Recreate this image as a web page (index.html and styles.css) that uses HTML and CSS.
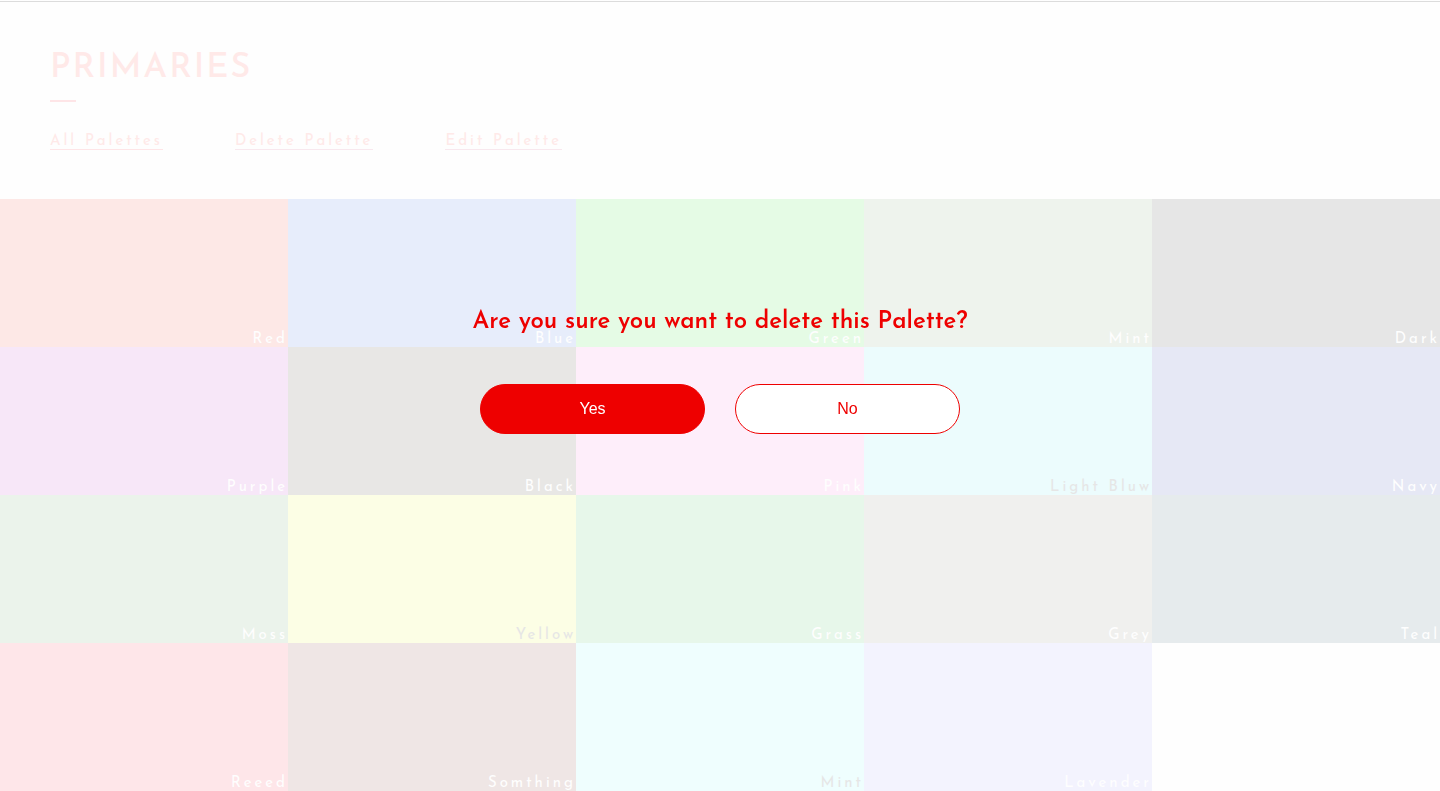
FILE: index.html
```html
<!DOCTYPE html>
<html lang="en">
<head>
<meta charset="utf-8">
<meta name="viewport" content="width=device-width, initial-scale=1">
<title>Primaries</title>
<link rel="stylesheet" href="styles.css">
</head>
<body>
<div class="page">
  <header class="header">
    <h1 class="title">PRIMARIES</h1>
    <nav class="nav">
      <a class="nav-link" href="#all">All Palettes</a>
      <a class="nav-link nav-link-alt" href="#delete">Delete Palette</a>
      <a class="nav-link nav-link-alt" href="#edit">Edit Palette</a>
    </nav>
  </header>
  <main class="swatches">
    <div class="swatch red">Red</div>
    <div class="swatch blue">Blue</div>
    <div class="swatch green">Green</div>
    <div class="swatch mint">Mint</div>
    <div class="swatch dark">Dark</div>
    <div class="swatch purple">Purple</div>
    <div class="swatch black">Black</div>
    <div class="swatch pink">Pink</div>
    <div class="swatch light-blue dark-label">Light Bluw</div>
    <div class="swatch navy">Navy</div>
    <div class="swatch moss">Moss</div>
    <div class="swatch yellow dark-label">Yellow</div>
    <div class="swatch grass">Grass</div>
    <div class="swatch grey">Grey</div>
    <div class="swatch teal">Teal</div>
    <div class="swatch reeed">Reeed</div>
    <div class="swatch somthing">Somthing</div>
    <div class="swatch aqua dark-label">Mint</div>
    <div class="swatch lavender">Lavender</div>
  </main>
</div>
<div class="overlay" role="dialog" aria-modal="true" aria-labelledby="question">
  <h2 class="question" id="question">Are you sure you want to delete this Palette?</h2>
  <div class="actions">
    <button class="button button-yes" type="button">Yes</button>
    <button class="button button-no" type="button">No</button>
  </div>
</div>
</body>
</html>
```
FILE: styles.css
```css
* {
  box-sizing: border-box;
}

body {
  margin: 0;
  background: #fefefe;
  font-family: "Josefin Sans", Lato, sans-serif;
}

.page {
  display: flex;
  flex-direction: column;
  min-height: 100vh;
  padding-top: 1px;
}

.header {
  border-top: 1px solid #dcdcdc;
  padding: 47px 50px 49px;
  color: #ffe9e8;
}

.title {
  margin: 0;
  font-size: 34px;
  line-height: 40px;
  font-weight: 500;
  letter-spacing: 2px;
}

.title::after {
  content: "";
  display: block;
  width: 26px;
  height: 2px;
  margin-top: 11px;
  background: #fee5e7;
}

.nav {
  display: flex;
  gap: 72px;
  margin-top: 32px;
}

.nav-link {
  border-bottom: 1px solid #fee5e7;
  color: inherit;
  font-size: 15px;
  line-height: 15px;
  font-weight: 400;
  letter-spacing: 3px;
  text-decoration: none;
}

.nav-link-alt {
  border-bottom-color: #f8e8ee;
}

.swatches {
  flex: 1;
  display: grid;
  grid-template-columns: repeat(5, 1fr);
  grid-auto-rows: 1fr;
}

.swatch {
  display: flex;
  align-items: flex-end;
  justify-content: flex-end;
  color: #fefefe;
  font-size: 15px;
  line-height: 15px;
  font-weight: 400;
  letter-spacing: 3px;
}

.dark-label {
  color: #e6e6e6;
}

.red { background: #fde8e6; }
.blue { background: #e7edfb; }
.green { background: #e5fbe5; }
.mint { background: #eef3ed; }
.dark { background: #e6e6e6; }
.purple { background: #f7e7f8; }
.black { background: #e8e7e5; }
.pink { background: #feeefa; }
.light-blue { background: #ecfcfd; }
.navy { background: #e6e8f5; }
.moss { background: #ebf3eb; }
.yellow { background: #fcfee5; }
.grass { background: #e7f7ea; }
.grey { background: #f0f0ee; }
.teal { background: #e6ebed; }
.reeed { background: #fee6e9; }
.somthing { background: #efe6e5; }
.aqua { background: #effefe; }
.lavender { background: #f3f3fe; }

.overlay {
  position: fixed;
  inset: 0;
  display: flex;
  flex-direction: column;
  align-items: center;
  justify-content: center;
  gap: 48px;
  padding-bottom: 50px;
}

.question {
  margin: 0;
  color: #ee0000;
  font-size: 24px;
  line-height: 28px;
  font-weight: 600;
  text-align: center;
}

.actions {
  display: flex;
  gap: 30px;
}

.button {
  width: 225px;
  height: 50px;
  border: 1px solid #ee0000;
  border-radius: 25px;
  font-family: "Liberation Sans", Arial, sans-serif;
  font-size: 16px;
  cursor: pointer;
}

.button-yes {
  background: #ee0000;
  color: #ffffff;
}

.button-no {
  background: #ffffff;
  color: #ee0000;
}
```
